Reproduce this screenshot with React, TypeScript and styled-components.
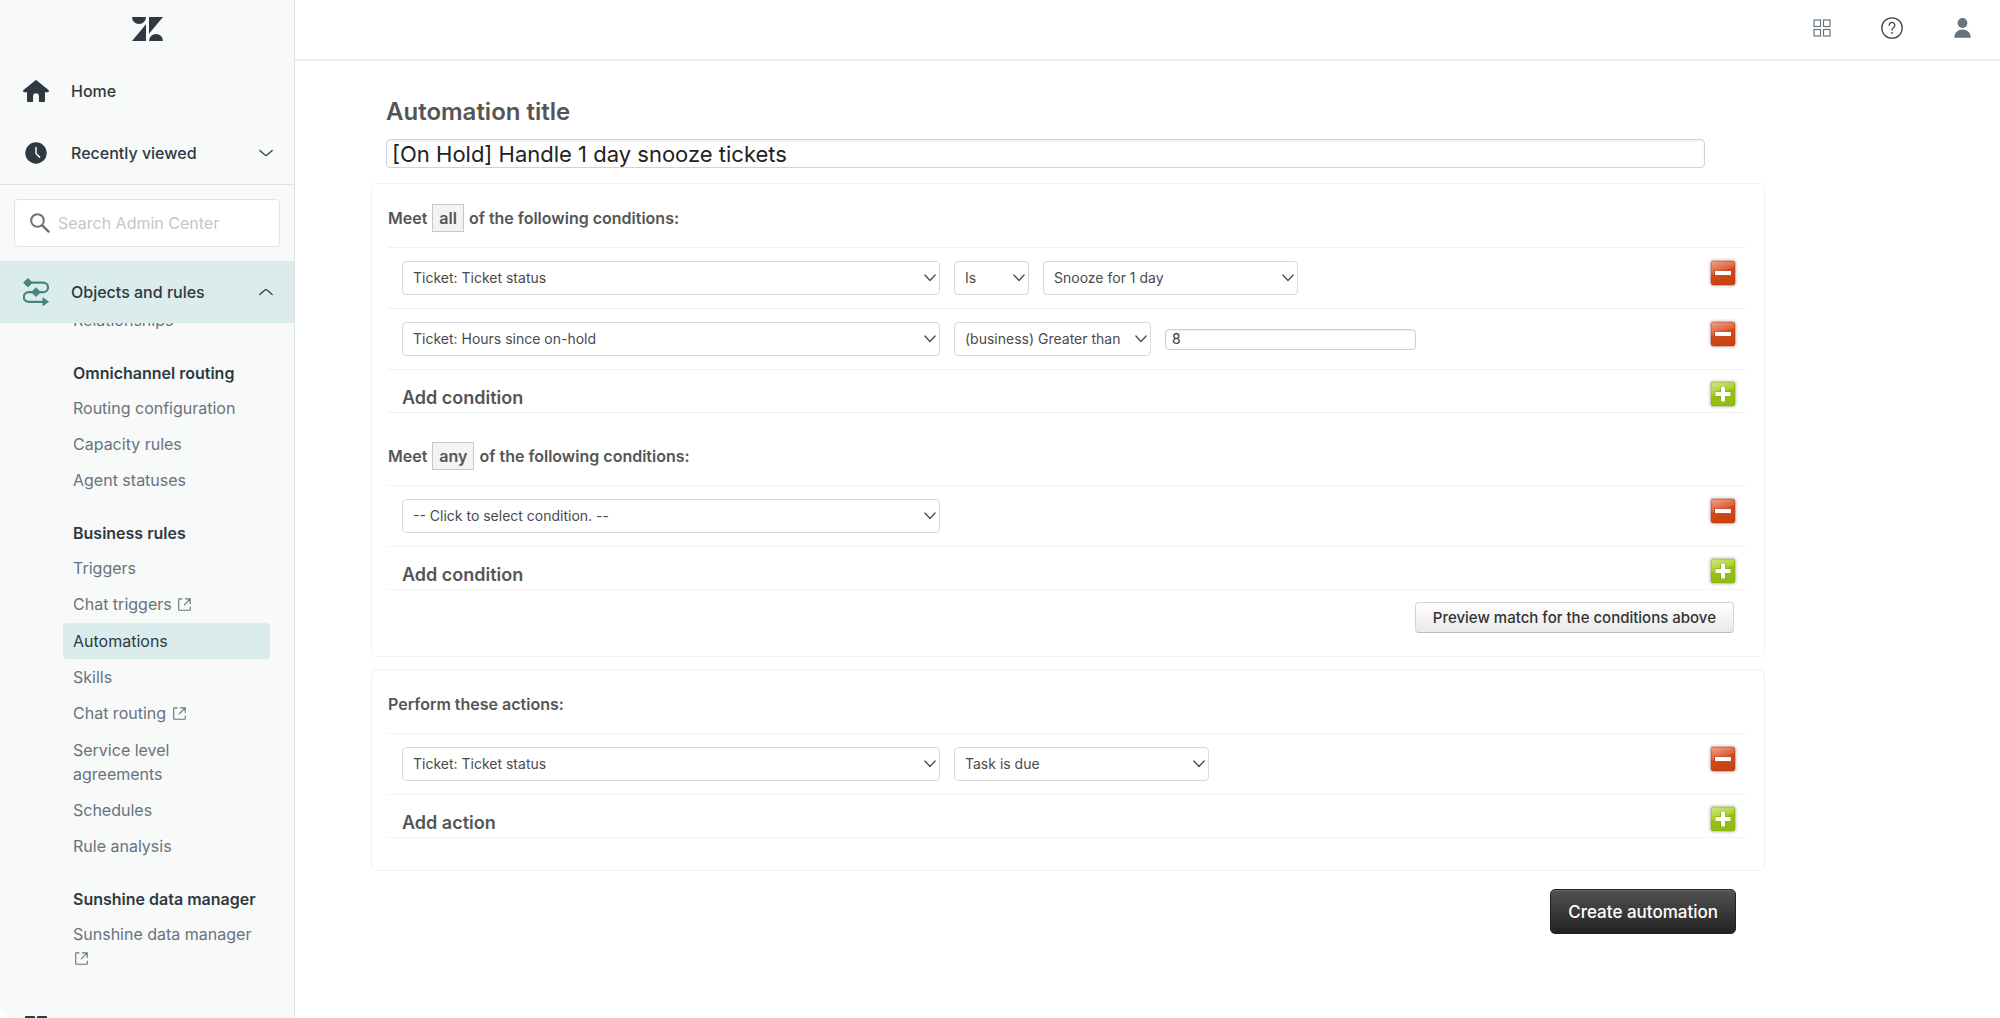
import React, { useId } from 'react';
import styled, { createGlobalStyle, css } from 'styled-components';

const color = {
  ink: '#2f3941',
  muted: '#68737d',
  line: '#dfe3e6',
  teal: '#458580',
  tealSoft: '#daecec',
  text: '#555555',
  rule: '#f1f1f2',
};

const GlobalStyle = createGlobalStyle`
  *, *::before, *::after { box-sizing: border-box; }
  body {
    margin: 0;
    background: #fff;
    color: ${color.text};
    font-family: Inter, "Liberation Sans", sans-serif;
    font-size: 16px;
    line-height: 24px;
  }
  button, input, select { font: inherit; color: inherit; }
  h1, h2, h3, ul { margin: 0; padding: 0; font-size: inherit; }
  svg { display: block; flex: none; }
`;

/* ---------- Shell ---------- */

const Shell = styled.div`
  display: grid;
  grid-template-columns: 295px minmax(0, 1fr);
  height: 100vh;
  overflow: hidden;
`;

const Sidebar = styled.aside`
  display: flex;
  flex-direction: column;
  min-height: 0;
  overflow: hidden;
  background: #f8f9f9;
  border-right: 1px solid ${color.line};
  border-bottom-left-radius: 14px;
`;

const LogoBar = styled.div`
  display: flex;
  justify-content: center;
  padding: 17px 0 19px;
`;

const NavRow = styled.button<{ $active?: boolean }>`
  display: grid;
  grid-template-columns: 26px 1fr 14px;
  column-gap: 22px;
  align-items: center;
  flex: none;
  width: 100%;
  height: 62px;
  padding: 0 21px 0 23px;
  border: 0;
  background: ${(p) => (p.$active ? color.tealSoft : 'transparent')};
  color: ${color.ink};
  font-weight: 500;
  text-align: left;
  cursor: pointer;

  > svg { justify-self: center; }
`;

const SearchBar = styled.div`
  flex: none;
  padding: 14px;
  border-top: 1px solid ${color.line};
`;

const SearchBox = styled.label`
  display: flex;
  align-items: center;
  gap: 8px;
  height: 48px;
  padding: 0 15px;
  border: 1px solid ${color.line};
  border-radius: 4px;
  background: #fff;
`;

const SearchInput = styled.input`
  flex: 1;
  min-width: 0;
  padding: 0;
  border: 0;
  outline: 0;
  background: transparent;

  &::placeholder { color: #c2c8cc; opacity: 1; }
`;

const NavScroll = styled.nav`
  flex: 1;
  min-height: 0;
  overflow: hidden;
`;

const NavSections = styled.div`
  margin-top: -21px;
  padding: 0 24px 19px 63px;
`;

const NavGroupTitle = styled.h2`
  padding: 23px 10px 5px;
  color: ${color.ink};
  font-weight: 600;
`;

const NavList = styled.ul`
  list-style: none;
`;

const NavLink = styled.a<{ $active?: boolean; $external?: boolean }>`
  display: block;
  padding: 6px 10px ${(p) => (p.$external ? 7 : 6)}px;
  border-radius: 4px;
  color: ${color.muted};
  text-decoration: none;

  ${(p) =>
    p.$active &&
    css`
      background: ${color.tealSoft};
      color: ${color.ink};
    `}

  svg { display: inline-block; vertical-align: -1px; }
`;

/* ---------- Content ---------- */

const Content = styled.div`
  min-width: 0;
  overflow: hidden;
`;

const TopBar = styled.header`
  display: flex;
  justify-content: flex-end;
  align-items: center;
  gap: 46px;
  height: 61px;
  padding: 0 26px 3px 0;
  border-bottom: 2px solid #ebeced;
`;

const IconButton = styled.button`
  display: grid;
  place-items: center;
  width: 24px;
  height: 24px;
  padding: 0;
  border: 0;
  background: none;
  color: ${color.muted};
  cursor: pointer;
`;

const Form = styled.form`
  padding: 35px 235px 40px 76px;
`;

const TitleField = styled.label`
  display: block;
  padding: 0 60px 3px 15px;
  font-size: 24px;
  font-weight: 600;
  line-height: 32px;
`;

const TitleInput = styled.input`
  display: block;
  width: 100%;
  height: 29px;
  margin-top: 11px;
  padding: 0 5px;
  border: 1px solid #d3d3d5;
  border-radius: 4px;
  box-shadow: inset 0 1px 2px #ececee;
  outline: 0;
  background: #fff;
  color: #222;
  font-size: 22px;
  font-weight: 400;
`;

const Card = styled.section<{ $bottom: number }>`
  margin-top: 12px;
  padding: 0 18px ${(p) => p.$bottom}px 16px;
  border: 1px solid ${color.rule};
  border-radius: 6px;
`;

const GroupTitle = styled.h3<{ $spaced?: boolean }>`
  display: flex;
  align-items: center;
  gap: 5px;
  padding: ${(p) => (p.$spaced ? 29 : 20)}px 0 15px;
  line-height: 28px;
  font-weight: 600;
`;

const MatchWord = styled.span`
  padding: 0 6px;
  border: 1px solid #c9c9cb;
  background: #f3f3f3;
  line-height: 26px;
`;

const Row = styled.div`
  display: flex;
  align-items: center;
  gap: 14px;
  height: 61px;
  padding: 0 8px 0 14px;
  border-top: 1px solid ${color.rule};
`;

const SquareButton = styled.button`
  align-self: flex-start;
  margin: 10px 0 0 auto;
  padding: 0;
  border: 0;
  background: none;
  cursor: pointer;
`;

const AddRow = styled(Row)`
  align-items: flex-end;
  height: 44px;
  border-bottom: 1px solid ${color.rule};
  font-size: 18px;
  font-weight: 600;
  line-height: 28px;

  ${SquareButton} { margin-top: 9px; }
`;

const SelectBox = styled.span<{ $width: number }>`
  position: relative;
  flex: 0 1 ${(p) => p.$width}px;
  min-width: 0;
  color: #4a4a4c;

  svg {
    position: absolute;
    top: 50%;
    right: 4px;
    margin-top: -4px;
    pointer-events: none;
  }
`;

const Select = styled.select`
  display: block;
  width: 100%;
  height: 34px;
  padding: 0 20px 0 10px;
  border: 1px solid #d9d9db;
  border-radius: 4px;
  background: #fff;
  appearance: none;
  font-size: 14px;
`;

const ValueInput = styled.input`
  flex: 0 1 251px;
  min-width: 0;
  height: 21px;
  padding: 0 6px;
  border: 1px solid #cfcfd1;
  border-radius: 4px;
  box-shadow: inset 0 1px 2px #ececee;
  color: #333;
  font-size: 14px;
`;

const ButtonRow = styled.div<{ $top: number; $right: number }>`
  display: flex;
  justify-content: flex-end;
  padding: ${(p) => p.$top}px ${(p) => p.$right}px 0 0;
`;

const PreviewButton = styled.button`
  height: 31px;
  padding: 0 17px;
  border: 1px solid #d4d4d6;
  border-bottom-color: #bdbdbf;
  border-radius: 4px;
  background: linear-gradient(#ffffff, #e9e9ea);
  color: #333;
  font-size: 15px;
  font-weight: 500;
  line-height: 28px;
  cursor: pointer;
`;

const CreateButton = styled.button`
  height: 45px;
  padding: 0 17px;
  border: 1px solid #222;
  border-radius: 5px;
  background: linear-gradient(#525252, #222222);
  box-shadow: inset 0 1px 0 #6b6b6b;
  color: #fff;
  font-size: 17px;
  font-weight: 500;
  cursor: pointer;
`;

/* ---------- Icons ---------- */

const Logo = () => (
  <svg width="31" height="24" viewBox="0 0 31 24" fill={color.ink} role="img" aria-label="Zendesk">
    <path d="M0 0H14A7 7 0 0 1 0 0ZM17 0H31L17 16.700ZM14 7.300V24H0ZM17 24A7 7 0 0 1 31 24Z" />
  </svg>
);

const HomeIcon = () => (
  <svg width="26" height="22" viewBox="0 0 26 22" fill={color.ink}>
    <path d="M12.200.4a1.200 1.200 0 0 1 1.600 0l11.700 9.700c.9.800.3 2.200-.8 2.200H22v8.400c0 .8-.5 1.300-1.300 1.300h-4c-.5 0-.8-.3-.8-.8v-5.100a2.900 2.900 0 0 0-5.800 0v5.100c0 .5-.3.8-.8.8h-4C4.500 22 4 21.500 4 20.700v-8.400H1.300c-1.100 0-1.700-1.400-.8-2.200z" />
  </svg>
);

const ClockIcon = () => (
  <svg width="22" height="22" viewBox="0 0 22 22">
    <circle cx="11" cy="11" r="10.700" fill={color.ink} />
    <path d="M11 5.500v5.300c0 .6.200 1 .6 1.400l3 2.900" fill="none" stroke="#f8f9f9" strokeWidth="1.500" strokeLinecap="round" />
  </svg>
);

const SearchIcon = () => (
  <svg width="20" height="20" viewBox="0 0 20 20" fill="none" stroke={color.muted} strokeLinecap="round">
    <circle cx="7.500" cy="7.500" r="6.300" strokeWidth="2" />
    <path d="M12.300 12.300 18.600 18.600" strokeWidth="2.400" />
  </svg>
);

const ObjectsIcon = () => (
  <svg width="26" height="28" viewBox="0 0 26 28" fill={color.teal}>
    <path
      d="M5 4.700H20.300a4.700 4.700 0 0 1 0 9.400H5.700a4.900 4.900 0 0 0 0 9.800H21"
      fill="none"
      stroke={color.teal}
      strokeWidth="2.200"
    />
    <path d="M4.900.5 9.200 4.700 4.900 8.900.6 4.700ZM13 9.700l4.400 4.400-4.400 4.400-4.400-4.400Z" stroke={color.teal} strokeLinejoin="round" />
    <path d="M20 19.900 25.400 23.800 20 27.500Z" stroke={color.teal} strokeLinejoin="round" />
  </svg>
);

const AppsIcon = () => (
  <svg width="22" height="22" viewBox="0 0 22 22" fill={color.ink}>
    <rect width="10" height="10" rx="1" />
    <rect x="12" width="10" height="10" rx="1" />
    <rect y="12" width="10" height="10" rx="1" />
    <rect x="12" y="12" width="10" height="10" rx="1" />
  </svg>
);

const NavChevron = ({ up }: { up?: boolean }) => (
  <svg width="14" height="8" viewBox="0 0 14 8" fill="none" stroke={color.ink} strokeWidth="1.200" strokeLinecap="round">
    <path d={up ? 'M.8 6.500 6.300 1.800q.7-.5 1.400 0L13.200 6.500' : 'M.8 1.500 6.300 6.200q.7.5 1.400 0L13.200 1.500'} />
  </svg>
);

const SelectChevron = () => (
  <svg width="12" height="8" viewBox="0 0 12 8" fill="none" stroke="#4a4a4c" strokeWidth="1.300" strokeLinecap="round">
    <path d="M.9 1 6 6.500 11.100 1" />
  </svg>
);

const ExternalIcon = () => (
  <svg width="15" height="13" viewBox="-2 0 15 13" fill="none" stroke={color.muted} strokeWidth="1.100" strokeLinecap="round">
    <path d="M4 .9H1.400Q.7.900.7 1.600V11.500q0 .7.700.7H11.600q.7 0 .7-.7V9" />
    <path d="M7.500.9H12.200V5.600M12 1.100 6.300 6.800" />
  </svg>
);

const ProductsIcon = () => (
  <svg width="18" height="18" viewBox="0 0 18 18" fill="none" stroke="currentColor" strokeWidth="1.200">
    <rect x="1" y="1" width="6.500" height="6.500" />
    <rect x="10.500" y="1" width="6.500" height="6.500" />
    <rect x="1" y="10.500" width="6.500" height="6.500" />
    <rect x="10.500" y="10.500" width="6.500" height="6.500" />
  </svg>
);

const HelpIcon = () => (
  <svg width="22" height="22" viewBox="0 0 22 22" fill="none" stroke="#444" strokeWidth="1.300">
    <circle cx="11" cy="11" r="10.200" />
    <path d="M8.200 8.300a2.800 2.800 0 1 1 4.500 2.200c-1 .8-1.700 1.300-1.700 2.500" strokeLinecap="round" />
    <circle cx="11" cy="15.800" r=".6" fill="#444" strokeWidth=".7" />
  </svg>
);

const UserIcon = () => (
  <svg width="17" height="20" viewBox="0 0 17 20" fill="currentColor">
    <circle cx="8.500" cy="5" r="4.900" />
    <path d="M.3 19.800C.3 14.500 4 11.500 8.500 11.500s8.200 3 8.200 8.300z" />
  </svg>
);

const SquareIcon = ({ add }: { add?: boolean }) => {
  const id = useId();
  const edge = add ? '#7fa30d' : '#b5360c';
  return (
    <svg width="30" height="30" viewBox="0 0 30 30">
      <defs>
        <linearGradient id={id} x1="0" y1="0" x2=".35" y2="1">
          <stop offset="0" stopColor={add ? '#d6e88a' : '#f0a48a'} />
          <stop offset=".5" stopColor={add ? '#aad02b' : '#dd6238'} />
          <stop offset=".55" stopColor={add ? '#97c212' : '#d14a1c'} />
          <stop offset="1" stopColor={add ? '#93bd10' : '#c9430f'} />
        </linearGradient>
      </defs>
      <rect x=".5" y=".5" width="29" height="29" rx="5" fill="#e9e9ed" />
      <rect x="3" y="3" width="24" height="24" rx="2.500" fill={`url(#${id})`} stroke={edge} strokeOpacity=".6" />
      <path
        d={
          add
            ? 'M13 7.500h4V13h5.500v4H17v5.500h-4V17H7.500v-4H13Z'
            : 'M7 12.900H23V17.100H7Z'
        }
        fill="#fff"
        stroke={edge}
        strokeOpacity=".75"
        strokeWidth="1.200"
        paintOrder="stroke"
      />
    </svg>
  );
};

/* ---------- Parts ---------- */

type NavItem = { label: string; external?: boolean; active?: boolean };

const groups: { title: string; items: NavItem[] }[] = [
  {
    title: 'Omnichannel routing',
    items: [{ label: 'Routing configuration' }, { label: 'Capacity rules' }, { label: 'Agent statuses' }],
  },
  {
    title: 'Business rules',
    items: [
      { label: 'Triggers' },
      { label: 'Chat triggers', external: true },
      { label: 'Automations', active: true },
      { label: 'Skills' },
      { label: 'Chat routing', external: true },
      { label: 'Service level agreements' },
      { label: 'Schedules' },
      { label: 'Rule analysis' },
    ],
  },
  {
    title: 'Sunshine data manager',
    items: [{ label: 'Sunshine data manager', external: true }],
  },
];

const NavEntry = ({ label, external, active }: NavItem) => (
  <li>
    <NavLink href="#" $active={active} $external={external} aria-current={active ? 'page' : undefined}>
      {label}
      {external && (
        <>
          {' '}
          <ExternalIcon />
        </>
      )}
    </NavLink>
  </li>
);

const Dropdown = ({ label, value, width }: { label: string; value: string; width: number }) => (
  <SelectBox $width={width}>
    <Select aria-label={label} defaultValue={value}>
      <option>{value}</option>
    </Select>
    <SelectChevron />
  </SelectBox>
);

const Remove = ({ what }: { what: string }) => (
  <SquareButton type="button" aria-label={`Remove ${what}`}>
    <SquareIcon />
  </SquareButton>
);

const Add = ({ what }: { what: string }) => (
  <AddRow>
    Add {what}
    <SquareButton type="button" aria-label={`Add ${what}`}>
      <SquareIcon add />
    </SquareButton>
  </AddRow>
);

export default function App() {
  return (
    <>
      <GlobalStyle />
      <Shell>
        <Sidebar>
          <LogoBar>
            <Logo />
          </LogoBar>
          <NavRow>
            <HomeIcon />
            Home
          </NavRow>
          <NavRow>
            <ClockIcon />
            Recently viewed
            <NavChevron />
          </NavRow>
          <SearchBar>
            <SearchBox>
              <SearchIcon />
              <SearchInput type="search" placeholder="Search Admin Center" aria-label="Search Admin Center" />
            </SearchBox>
          </SearchBar>
          <NavRow $active aria-expanded="true">
            <ObjectsIcon />
            Objects and rules
            <NavChevron up />
          </NavRow>
          <NavScroll>
            <NavSections>
              <NavList>
                <NavEntry label="Relationships" />
              </NavList>
              {groups.map((group) => (
                <section key={group.title}>
                  <NavGroupTitle>{group.title}</NavGroupTitle>
                  <NavList>
                    {group.items.map((item) => (
                      <NavEntry key={item.label} {...item} />
                    ))}
                  </NavList>
                </section>
              ))}
            </NavSections>
            <NavRow aria-label="Apps">
              <AppsIcon />
            </NavRow>
          </NavScroll>
        </Sidebar>

        <Content>
          <TopBar>
            <IconButton aria-label="Products">
              <ProductsIcon />
            </IconButton>
            <IconButton aria-label="Help">
              <HelpIcon />
            </IconButton>
            <IconButton aria-label="Profile">
              <UserIcon />
            </IconButton>
          </TopBar>

          <Form>
            <TitleField>
              Automation title
              <TitleInput type="text" defaultValue="[On Hold] Handle 1 day snooze tickets" />
            </TitleField>

            <Card $bottom={23}>
              <GroupTitle>
                Meet <MatchWord>all</MatchWord> of the following conditions:
              </GroupTitle>
              <Row>
                <Dropdown label="Condition" value="Ticket: Ticket status" width={538} />
                <Dropdown label="Operator" value="Is" width={75} />
                <Dropdown label="Value" value="Snooze for 1 day" width={255} />
                <Remove what="condition" />
              </Row>
              <Row>
                <Dropdown label="Condition" value="Ticket: Hours since on-hold" width={538} />
                <Dropdown label="Operator" value="(business) Greater than" width={197} />
                <ValueInput type="text" aria-label="Hours" defaultValue="8" />
                <Remove what="condition" />
              </Row>
              <Add what="condition" />

              <GroupTitle $spaced>
                Meet <MatchWord>any</MatchWord> of the following conditions:
              </GroupTitle>
              <Row>
                <Dropdown label="Condition" value="-- Click to select condition. --" width={538} />
                <Remove what="condition" />
              </Row>
              <Add what="condition" />
              <ButtonRow $top={12} $right={12}>
                <PreviewButton type="button">Preview match for the conditions above</PreviewButton>
              </ButtonRow>
            </Card>

            <Card $bottom={32}>
              <GroupTitle>Perform these actions:</GroupTitle>
              <Row>
                <Dropdown label="Action" value="Ticket: Ticket status" width={538} />
                <Dropdown label="Value" value="Task is due" width={255} />
                <Remove what="action" />
              </Row>
              <Add what="action" />
            </Card>

            <ButtonRow $top={18} $right={29}>
              <CreateButton type="button">Create automation</CreateButton>
            </ButtonRow>
          </Form>
        </Content>
      </Shell>
    </>
  );
}
